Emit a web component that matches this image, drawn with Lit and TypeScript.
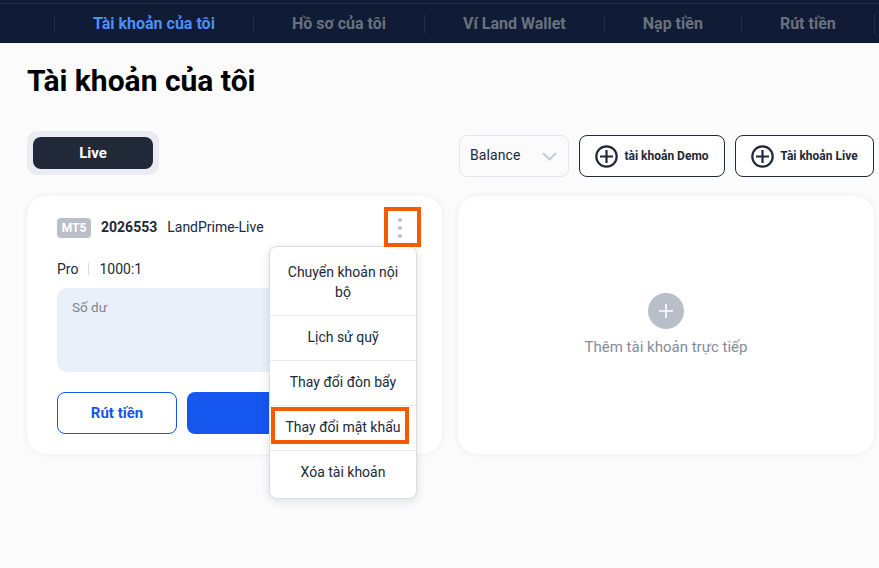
import { LitElement, html, css } from "lit";
import { customElement } from "lit/decorators.js";

const plus = html`<svg class="plus" viewBox="0 0 23 23" width="23" height="23" fill="none" stroke="#212838" stroke-width="2.2"><circle cx="11.5" cy="11.5" r="10.2"/><path d="M11.5 5v13M5 11.5h13"/></svg>`;

@customElement("app-root")
export class AppRoot extends LitElement {
  static styles = css`
    :host { display: block; width: 879px; height: 568px; overflow: hidden; background: #fbfbfc; font-family: Roboto, sans-serif; color: #212838; }
    * { box-sizing: border-box; }
    .nav { height: 43px; background: #101b35; border-top: 1px solid #101b35; display: flex; padding-left: 54px; position: relative; }
    .nav::before { content: ""; position: absolute; left: 0; right: 0; top: 2px; height: 1px; background: #1f2a45; }
    .nav a { margin-top: 13px; height: 20px; line-height: 20px; padding: 0 38px; border-left: 1px solid #222c47; font-size: 16px; font-weight: 700; color: #69717f; white-space: nowrap; flex: none; }
    .nav a.on { color: #4d8ffb; }
    .nav a:last-child { border-right: 1px solid #222c47; }
    main { padding: 0 5px 0 27px; }
    h1 { margin: 0; padding-top: 20px; height: 88px; font-size: 30px; line-height: 36px; font-weight: 700; color: #000; }
    .bar { display: flex; align-items: flex-start; height: 65px; }
    .tabs { width: 132px; height: 44px; padding: 6px; border-radius: 10px; background: #ebecf1; }
    .tab { height: 32px; border-radius: 8px; background: #212838; color: #fff; font-size: 15px; font-weight: 700; line-height: 32px; text-align: center; }
    .actions { margin-left: auto; display: flex; gap: 10px; padding-top: 4px; }
    .select { width: 110px; height: 42px; border: 1px solid #e5e7ec; border-radius: 8px; display: flex; align-items: center; justify-content: space-between; padding: 0 11px 2px 10px; font-size: 14px; letter-spacing: .1px; }
    .select svg { margin-top: 2px; }
    .btn { height: 42px; border: 1px solid #212838; border-radius: 8px; display: flex; align-items: center; justify-content: center; gap: 6px; font-size: 12px; font-weight: 700; background: #fff; }
    .demo { width: 146px; }
    .lv { width: 139px; }
    .plus { flex: none; }
    .cards { display: grid; grid-template-columns: 415px 416px; gap: 16px; }
    .card { position: relative; height: 258px; border-radius: 20px; background: #fff; box-shadow: 0 0 6px rgba(30, 40, 60, .07); }
    .acct { padding: 22px 30px 0; }
    .head { height: 20px; display: flex; align-items: center; font-size: 14px; }
    .badge { width: 34px; height: 20px; border-radius: 4px; background: #b9bec9; color: #fff; font-size: 12px; font-weight: 700; line-height: 20px; text-align: center; margin-right: 10px; }
    .num { font-weight: 700; margin-right: 10px; padding-bottom: 2px; }
    .host { padding-bottom: 2px; }
    .kebab { position: absolute; z-index: 1; left: 357px; top: 11px; width: 37px; height: 40px; border: 4px solid #f55a00; display: flex; flex-direction: column; align-items: center; justify-content: center; gap: 4px; padding: 2px 6px 0 0; }
    .kebab i { width: 4px; height: 4px; border-radius: 50%; background: #b9bec9; }
    .meta { margin-top: 21px; height: 20px; display: flex; align-items: center; font-size: 14px; }
    .meta i { width: 1px; height: 12px; background: #d9dce2; margin: 0 10px; }
    .box { margin-top: 9px; height: 84px; border-radius: 10px; background: #e9f0fa; padding: 12px 15px; font-size: 13.5px; line-height: 15px; color: #7c8391; }
    .row { margin-top: 20px; display: flex; gap: 10px; }
    .out { width: 120px; height: 42px; border: 1px solid #1556ee; border-radius: 8px; color: #1556ee; font-size: 15px; font-weight: 700; line-height: 40px; text-align: center; }
    .in { flex: 1; height: 42px; border-radius: 8px; background: #1556ee; }
    .menu { position: absolute; left: 242px; top: 50px; width: 148px; height: 253px; background: #fff; border: 1px solid #dcdde2; border-radius: 8px; box-shadow: 0 2px 8px rgba(30, 40, 60, .14); font-size: 14px; line-height: 22px; text-align: center; }
    .menu div { padding: 10px 14px 12px; border-bottom: 1px solid #e8e9ec; }
    .menu div:first-child { padding: 15px 14px 13px; line-height: 20px; }
    .menu div:last-of-type { border-bottom: 0; }
    .mark { position: absolute; left: 1px; top: 160px; width: 138px; height: 37px; border: 4px solid #f55a00; }
    .empty { display: flex; flex-direction: column; align-items: center; padding-top: 97px; }
    .circle { width: 36px; height: 36px; border-radius: 50%; background: #b9bec9; display: flex; align-items: center; justify-content: center; }
    .empty span { margin-top: 8px; font-size: 15px; line-height: 20px; color: #858c99; }
  `;

  render() {
    return html`
      <nav class="nav">
        <a class="on">Tài khoản của tôi</a><a>Hồ sơ của tôi</a><a>Ví Land Wallet</a><a>Nạp tiền</a><a>Rút tiền</a>
      </nav>
      <main>
        <h1>Tài khoản của tôi</h1>
        <div class="bar">
          <div class="tabs"><div class="tab">Live</div></div>
          <div class="actions">
            <div class="select">Balance
              <svg width="15" height="9" viewBox="0 0 15 9" fill="none" stroke="#c7cbd3" stroke-width="2"><path d="M1 1l6.5 6.5L14 1"/></svg>
            </div>
            <div class="btn demo">${plus}tài khoản Demo</div>
            <div class="btn lv">${plus}Tài khoản Live</div>
          </div>
        </div>
        <div class="cards">
          <section class="card acct">
            <div class="head"><span class="badge">MT5</span><span class="num">2026553</span><span class="host">LandPrime-Live</span></div>
            <div class="kebab"><i></i><i></i><i></i></div>
            <div class="meta">Pro<i></i>1000:1</div>
            <div class="box">Số dư</div>
            <div class="row"><div class="out">Rút tiền</div><div class="in"></div></div>
            <div class="menu">
              <div>Chuyển khoản nội bộ</div>
              <div>Lịch sử quỹ</div>
              <div>Thay đổi đòn bẩy</div>
              <div>Thay đổi mật khẩu</div>
              <div>Xóa tài khoản</div>
              <span class="mark"></span>
            </div>
          </section>
          <section class="card empty">
            <div class="circle"><svg width="14" height="14" viewBox="0 0 14 14" stroke="#fff" stroke-width="1.6"><path d="M7 0v14M0 7h14"/></svg></div>
            <span>Thêm tài khoản trực tiếp</span>
          </section>
        </div>
      </main>
    `;
  }
}
